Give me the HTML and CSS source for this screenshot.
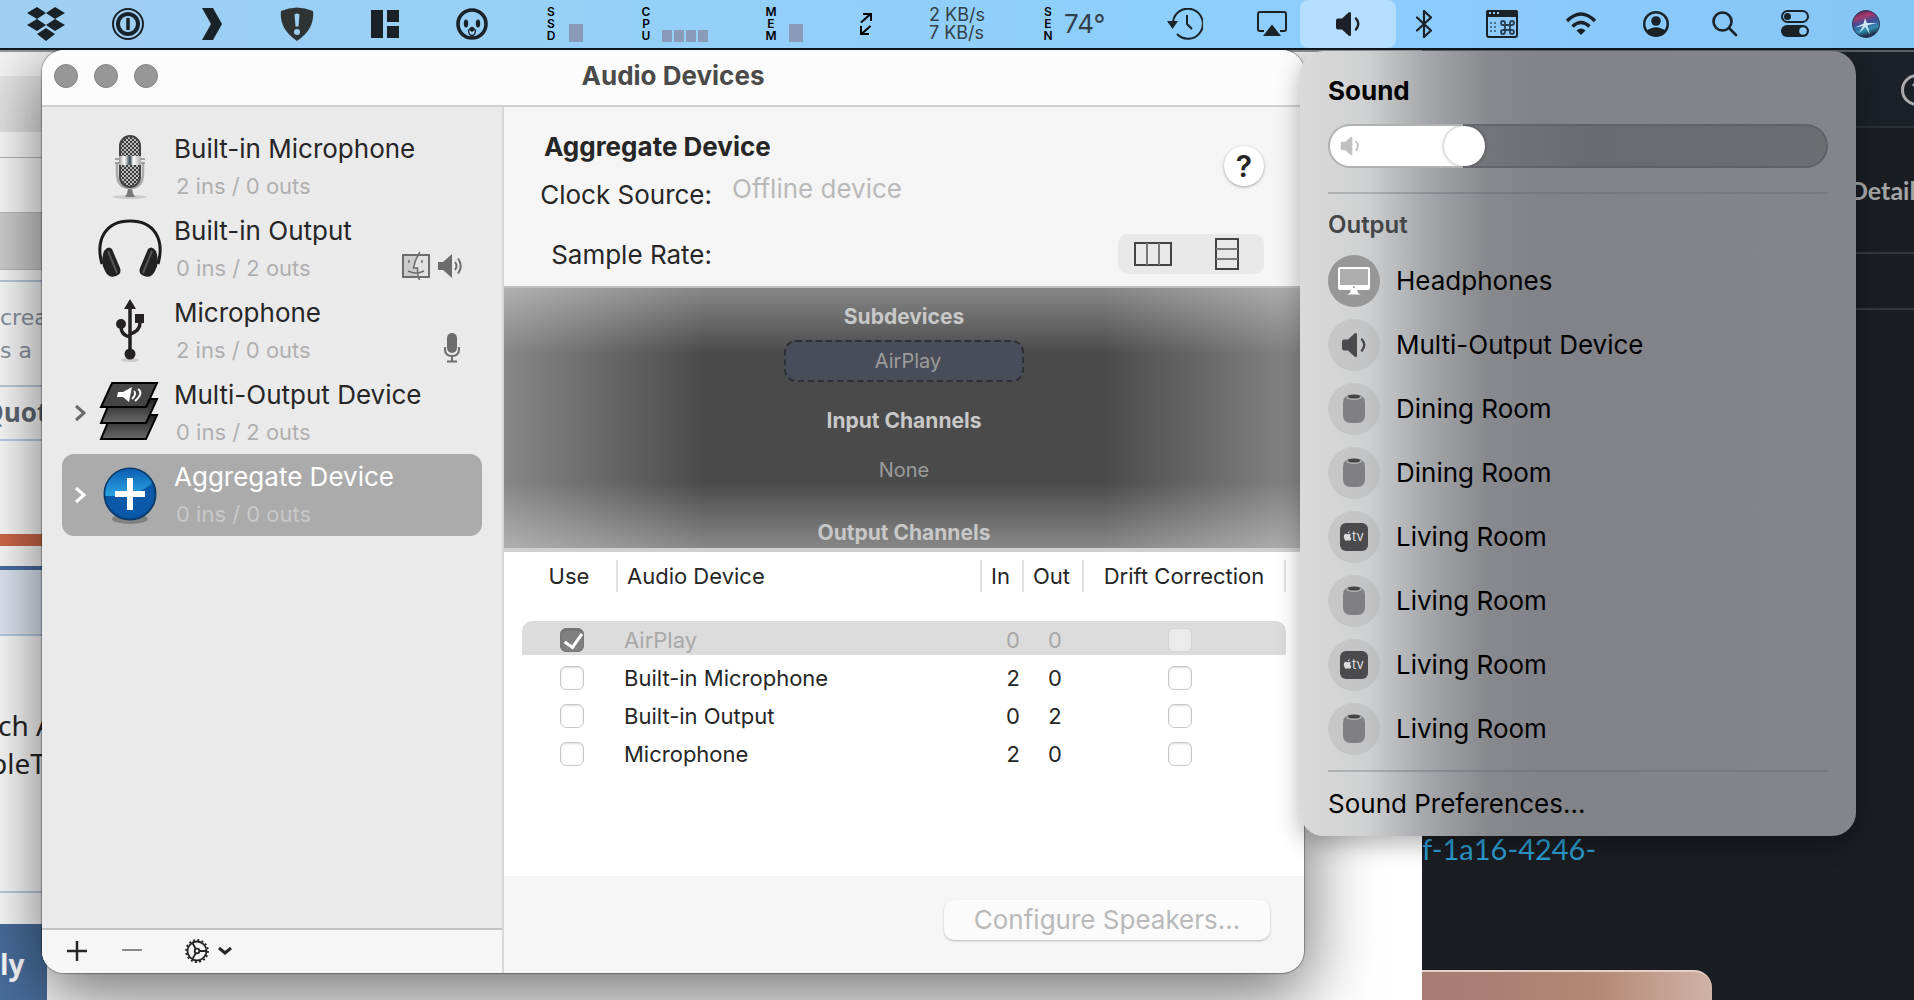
FILE: index.html
```html
<!DOCTYPE html>
<html lang="en">
<head>
    <meta charset="UTF-8">
    <meta name="viewport" content="width=device-width, initial-scale=1.0">
    <title>Audio Devices</title>
    <link rel="stylesheet" href="styles.css">
</head>
<body>

<!-- shared icons -->
<svg class="defs" aria-hidden="true">
    <symbol id="homepod" viewBox="0 0 22 30">
        <rect x="0" y="1" width="22" height="28" rx="7" fill="#808082"/>
        <ellipse cx="11" cy="3" rx="8" ry="3" fill="#b4b4b6"/>
        <ellipse cx="11" cy="2.500" rx="6.500" ry="2" fill="#48484a"/>
    </symbol>
    <symbol id="appletv" viewBox="0 0 28 28">
        <rect width="28" height="28" rx="6" fill="#4b4b4d"/>
        <path d="M7.800 11.300c1-.6 2.500-.5 3.200.5-1.300.9-1.200 2.900.4 3.600-.5 1.300-1.200 2.300-1.900 2.300-.6 0-.9-.4-1.600-.4s-1 .4-1.600.4c-1.200 0-2.500-2.300-2.500-4.300 0-2.100 1.500-3.100 2.800-2.500.5.3.8.5 1.200.4zM7.800 10.600c0-1.200.8-2.100 1.800-2.300.1 1.200-.8 2.200-1.800 2.300z" fill="#ddd"/>
        <text x="12" y="18" class="tv-text">tv</text>
    </symbol>
    <symbol id="speaker" viewBox="0 0 26 26">
        <path d="M1 9.500q0-2 2-2h4l6.500-6q2.500-1.500 2.500 1v21q0 2.500-2.500 1l-6.500-6H3q-2 0-2-2z" fill="currentColor"/>
        <path d="M21 7.500q4.500 5.500 0 11" fill="none" stroke="currentColor" stroke-width="2.400" stroke-linecap="round"/>
    </symbol>
</svg>

<header class="menubar">
    <div class="menu-left">
        <div class="menu-apps">
            <svg width="38" height="34" viewBox="0 0 38 34" fill="#1a2228"><path d="M10 0l9 6-9 6-10-6zM28 0l10 6-10 6-9-6zM10 12l9 6-9 6-10-6zM28 12l10 6-10 6-9-6zM19 21l9 6-9 7-9-7z"/></svg>
            <svg width="32" height="32" viewBox="0 0 32 32" fill="none" stroke="#1a2228"><circle cx="16" cy="16" r="15" stroke-width="2"/><circle cx="16" cy="16" r="10" stroke-width="4"/><path d="M16 10v12" stroke-width="3.500"/></svg>
        </div>
        <svg width="22" height="32" viewBox="1 0 22 32" fill="#1a2228"><path d="M2 0h11l9 16-9 16H2l9-16z"/></svg>
        <svg width="34" height="34" viewBox="0 0 34 34"><path d="M1 4Q17-3 33 4Q35 22 17 34Q-1 22 1 4z" fill="#303334"/><path d="M14.500 7.500q2.500-2 5 0l-1 12h-3z" fill="#9bcff2"/><circle cx="17" cy="25" r="3" fill="#9bcff2"/></svg>
        <svg width="28" height="28" viewBox="0 0 28 28" fill="#1a2228"><path d="M0 0h12v28H0zM16 0h12v12H16zM16 16h12v12H16z"/></svg>
        <svg width="32" height="32" viewBox="0 0 32 32"><circle cx="16" cy="16" r="14" fill="none" stroke="#1a2228" stroke-width="3.600"/><ellipse cx="10" cy="15.500" rx="2.200" ry="4" fill="#1a2228"/><ellipse cx="22" cy="15.500" rx="2.200" ry="4" fill="#1a2228"/><path d="M12.500 21.500q3.500-5.500 7 0l-3.500 2.500z" fill="#1a2228"/><path d="M12.500 21.500q0 6 3.500 6t3.500-6" fill="none" stroke="#1a2228" stroke-width="1.300"/></svg>
        <div class="stat">
            <span class="stat-label">S<br>S<br>D</span>
            <span class="bar bar-wide"></span>
        </div>
        <div class="stat stat-cpu">
            <span class="stat-label">C<br>P<br>U</span>
            <div class="cores"><span class="bar"></span><span class="bar"></span><span class="bar"></span><span class="bar"></span></div>
        </div>
        <div class="stat">
            <span class="stat-label">M<br>E<br>M</span>
            <span class="bar bar-wide"></span>
        </div>
        <svg width="12" height="22" viewBox="0 0 12 22" fill="none" stroke="#000" stroke-width="2"><path d="M1 9.500L10 1.500M3 1h8v7M10.500 13L2 20.500M1 13v8h8"/></svg>
        <div class="network">2 KB/s<br>7 KB/s</div>
        <div class="stat stat-temp">
            <span class="stat-label">S<br>E<br>N</span>
            <span class="temp">74°</span>
        </div>
        <svg width="36" height="32" viewBox="0 0 36 32" fill="none" stroke="#1a2228" stroke-width="2"><path d="M6 14a15 15 0 1 1 4 12"/><path d="M20 7v9l5 5"/><path d="M0 13h11l-5.500 8z" fill="#1a2228" stroke="none"/></svg>
    </div>
    <div class="menu-right">
        <svg width="30" height="26" viewBox="0 0 30 26" fill="none" stroke="#1a2228" stroke-width="2"><path d="M7 20H3q-2 0-2-2V3q0-2 2-2h24q2 0 2 2v15q0 2-2 2h-4"/><path d="M15 13.500L24 25H6z" fill="#1a2228" stroke="none"/></svg>
        <button class="volume" aria-label="Volume"><svg width="26" height="26"><use href="#speaker"/></svg></button>
        <svg width="30" height="28" viewBox="0 0 30 28" fill="none" stroke="#1a2228" stroke-width="2.200" stroke-linejoin="round" stroke-linecap="round"><path d="M8 7.500l14 13-7 6.500V1l7 6.500-14 13"/></svg>
        <svg width="34" height="30" viewBox="0 0 34 30"><rect x="2" y="2" width="30" height="26" rx="2" fill="none" stroke="#1a2228" stroke-width="2"/><path d="M1 3q0-2 2-2h28q2 0 2 2v5H1z" fill="#1a2228"/><path d="M4 4h2M8 4h2M12 4h2" stroke="#8ccbfc" stroke-width="2"/><path d="M5 14h2M9 14h2M5 18h2M9 18h2M5 22h2M9 22h2" stroke="#49708c" stroke-width="2"/><path d="M20 16h5v5h-5zM20 16h-2a2 2 0 1 1 2-2zM25 16v-2a2 2 0 1 1 2 2zM25 21h2a2 2 0 1 1-2 2zM20 21v2a2 2 0 1 1-2-2z" fill="none" stroke="#294052" stroke-width="1.800"/></svg>
        <svg width="32" height="24" viewBox="0 0 32 24" fill="none" stroke="#1a2228" stroke-width="3.400"><path d="M2 9q14-14 28 0M7.500 14.500q8.500-8 17 0"/><path d="M11.500 18.500q4.500-4 9 0L16 23z" fill="#1a2228" stroke="none"/></svg>
        <div class="menu-system">
            <svg width="26" height="26" viewBox="0 0 26 26"><circle cx="13" cy="13" r="11.800" fill="none" stroke="#1a2228" stroke-width="2.400"/><circle cx="13" cy="10" r="4.800" fill="#1a2228"/><path d="M3.500 20q9.500-7.500 19 0-9.500 10-19 0z" fill="#1a2228"/></svg>
            <svg width="26" height="26" viewBox="0 0 26 26" fill="none" stroke="#1a2228" stroke-width="2.600" stroke-linecap="round"><circle cx="10.500" cy="10.500" r="9"/><path d="M17.500 17.500l6.500 6.500"/></svg>
            <svg width="28" height="28" viewBox="0 0 28 28"><rect x="1" y="1" width="26" height="11" rx="5.500" fill="none" stroke="#1a2228" stroke-width="2"/><circle cx="6.500" cy="6.500" r="3.500" fill="#1a2228"/><rect x="0" y="15" width="28" height="12" rx="6" fill="#1a2228"/><circle cx="22" cy="21" r="3.800" fill="#8ccbfc"/></svg>
            <svg width="28" height="28" viewBox="0 0 28 28"><defs><linearGradient id="siri" x2=".3" y2="1"><stop offset="0" stop-color="#2a2440"/><stop offset=".3" stop-color="#a8376c"/><stop offset=".55" stop-color="#3c4f9c"/><stop offset=".8" stop-color="#2f8fb0"/><stop offset="1" stop-color="#20304e"/></linearGradient></defs><circle cx="14" cy="14" r="13.500" fill="url(#siri)" stroke="#2b3550"/><path d="M13 8l2 5L25 13l-9.500 2.200L18 25l-4.500-8L7 23l4-7-8 1.500 8.500-4z" fill="#e8fbff" opacity=".85"/></svg>
        </div>
    </div>
</header>

<main class="desktop">

    <!-- browser page behind everything -->
    <section class="back-page">
        <div class="page-tabs"></div>
        <div class="page-toolbar"></div>
        <div class="page-row"></div>
        <div class="page-row page-row-tall"></div>
        <div class="page-gray"></div>
        <div class="page-gap"></div>
        <div class="page-note">crea<br>s a</div>
        <div class="page-quote">Quot</div>
        <div class="page-orange"></div>
        <div class="page-blue"></div>
        <div class="page-text"><p>ch A</p><p class="page-clip">pleT</p></div>
        <div class="page-reply">ly</div>
    </section>

    <section class="dark-app">
        <div class="dark-top">
            <svg width="32" height="32" viewBox="0 0 32 32" fill="none" stroke="#a9abad" stroke-width="3"><circle cx="16" cy="16" r="14.500"/><path d="M12 12q4-5 7 0"/></svg>
        </div>
        <div class="dark-details">Detail</div>
        <div class="dark-row"></div>
        <div class="dark-body">
            <a href="#" class="dark-link">f-1a16-4246-</a>
            <div class="dark-card"></div>
        </div>
    </section>

    <section class="window">
        <div class="titlebar">
            <div class="lights"><span></span><span></span><span></span></div>
            <h1>Audio Devices</h1>
        </div>
        <div class="window-body">
            <aside class="sidebar">
                <ul class="devices">
                    <li class="device">
                        <span class="arrow"></span>
                        <svg class="device-icon" viewBox="0 0 64 64">
                            <defs>
                                <pattern id="mesh" width="4" height="4" patternUnits="userSpaceOnUse"><rect width="4" height="4" fill="#3c3c3c"/><circle cx="1" cy="1" r="1" fill="#e4e4e4"/><circle cx="3" cy="3" r="1" fill="#e4e4e4"/></pattern>
                                <linearGradient id="chrome"><stop offset="0" stop-color="#999"/><stop offset=".25" stop-color="#fff"/><stop offset=".5" stop-color="#34464e"/><stop offset=".65" stop-color="#fff"/><stop offset="1" stop-color="#aaa"/></linearGradient>
                            </defs>
                            <ellipse cx="32" cy="62" rx="17" ry="2" fill="#ccc"/>
                            <path d="M27 62q3-4 3-10h4q0 6 3 10z" fill="#777"/>
                            <path d="M19 28v10q0 15 13 15t13-15V28" fill="none" stroke="#aaa" stroke-width="2.500"/>
                            <path d="M17 24h6M17 28h6M41 24h6M41 28h6" stroke="#888" stroke-width="1.500"/>
                            <rect x="22" y="1" width="20" height="51" rx="10" fill="url(#mesh)" stroke="#444" stroke-width="2"/>
                            <rect x="21" y="21" width="22" height="9" fill="url(#chrome)"/>
                        </svg>
                        <div class="device-text"><h2>Built-in Microphone</h2><p>2 ins / 0 outs</p></div>
                    </li>
                    <li class="device">
                        <span class="arrow"></span>
                        <svg class="device-icon" viewBox="0 0 64 64">
                            <path d="M4 47C-3 22 8 4 32 4s35 18 28 43" fill="none" stroke="#1c1c1c" stroke-width="3"/>
                            <path d="M6 34q4-6 8-2l8 19q2 6-4 8-7 3-11-5Q2 46 6 34z" fill="#222"/>
                            <path d="M58 34q-4-6-8-2l-8 19q-2 6 4 8 7 3 11-5 5-8 1-20z" fill="#222"/>
                            <path d="M10 34l9 22M54 34l-9 22" stroke="#555" stroke-width="2"/>
                        </svg>
                        <div class="device-text"><h2>Built-in Output</h2><p>0 ins / 2 outs</p></div>
                        <div class="device-flags">
                            <svg width="28" height="30" viewBox="0 0 28 30" fill="none" stroke="#6c6c6c"><rect x="1" y="4" width="26" height="22" fill="#e2e2e3" stroke-width="2"/><path d="M2 5h13l-4 12h4v8H2z" fill="#ccc" stroke="none"/><path d="M18 1q-5 7-6.500 16h4q0 8 2 12M7 9v3M20 9v3M6 20q8 4 16 0" stroke-width="1.500"/></svg>
                            <svg width="28" height="24" viewBox="0 0 28 24" fill="none" stroke="#6c6c6c" stroke-width="2"><path d="M0 8h5l9-8v24l-9-8H0z" fill="#6c6c6c" stroke="none"/><path d="M17 8q3 4 0 8M20 4.500q5.500 7.500 0 15" /></svg>
                        </div>
                    </li>
                    <li class="device">
                        <span class="arrow"></span>
                        <svg class="device-icon" viewBox="0 0 64 64">
                            <ellipse cx="32" cy="61" rx="9" ry="2" fill="#ccc"/>
                            <path d="M32 8v46M23 26v2q0 8 9 10M42 20v4q0 8-10 11" fill="none" stroke="#242122" stroke-width="3.500"/>
                            <path d="M32 0l6 10H26z" fill="#242122"/><circle cx="23" cy="25" r="5" fill="#242122"/><path d="M37 15h9v9h-9z" fill="#242122"/><circle cx="32" cy="55" r="5.500" fill="#242122"/>
                        </svg>
                        <div class="device-text"><h2>Microphone</h2><p>2 ins / 0 outs</p></div>
                        <div class="device-flags">
                            <svg width="28" height="30" viewBox="0 0 28 30" fill="none" stroke="#6c6c6c" stroke-width="2"><rect x="9" y="0" width="10" height="20" rx="5" fill="#6c6c6c" stroke="none"/><path d="M7 14v2q0 7 7 7t7-7v-2M14 23v5M9 28.500h10"/></svg>
                        </div>
                    </li>
                    <li class="device">
                        <button class="arrow" aria-label="Expand"><svg width="12" height="20" viewBox="0 0 12 20" fill="none" stroke="#6a6a6a" stroke-width="3"><path d="M2 3l8 7-8 7"/></svg></button>
                        <svg class="device-icon" viewBox="0 0 64 64">
                            <defs><linearGradient id="sheet" x2="0" y2="1"><stop offset="0" stop-color="#222"/><stop offset="1" stop-color="#6a6a6a"/></linearGradient></defs>
                            <path d="M13 34h46L48 58H3z" fill="url(#sheet)" stroke="#000" stroke-width="2"/>
                            <path d="M13 18h46L48 42H3z" fill="url(#sheet)" stroke="#000" stroke-width="2"/>
                            <path d="M14 2h45L48 26H3z" fill="#454545" stroke="#000" stroke-width="2"/>
                            <path d="M20 11h5l9-5-3 15-6-5h-6z" fill="#fff"/><path d="M36 10q3 3-2 8M40 8q6 4-3 12" fill="none" stroke="#fff" stroke-width="2"/>
                        </svg>
                        <div class="device-text"><h2>Multi-Output Device</h2><p>0 ins / 2 outs</p></div>
                    </li>
                    <li class="device selected">
                        <button class="arrow" aria-label="Expand"><svg width="12" height="20" viewBox="0 0 12 20" fill="none" stroke="#fff" stroke-width="3"><path d="M2 3l8 7-8 7"/></svg></button>
                        <svg class="device-icon" viewBox="0 0 64 64">
                            <defs><linearGradient id="blue" x2="0" y2="1"><stop offset="0" stop-color="#0d5fb4"/><stop offset="1" stop-color="#2aa6e2"/></linearGradient></defs>
                            <ellipse cx="32" cy="56" rx="18" ry="5" fill="#808080"/>
                            <circle cx="32" cy="31" r="25.500" fill="#0a58a8" stroke="#0b3c6e" stroke-width="2"/>
                            <path d="M7.500 33A24.500 24.500 0 0 1 54 20Q40 34 7.500 33z" fill="url(#blue)"/>
                            <path d="M32 15v32M17 31h30" stroke="#fff" stroke-width="6"/>
                        </svg>
                        <div class="device-text"><h2>Aggregate Device</h2><p>0 ins / 0 outs</p></div>
                    </li>
                </ul>
                <div class="sidebar-tools">
                    <button aria-label="Add"><svg width="22" height="22" viewBox="0 0 22 22" stroke="#262626" stroke-width="2.500"><path d="M11 1v20M1 11h20"/></svg></button>
                    <button aria-label="Remove"><svg width="22" height="22" viewBox="0 0 22 22" stroke="#8a8a8a" stroke-width="2"><path d="M1 10h20"/></svg></button>
                    <button class="gear" aria-label="Actions">
                        <svg width="24" height="24" viewBox="0 0 24 24" fill="none" stroke="#262626" stroke-width="1.800"><circle cx="12" cy="12" r="9.500"/><circle cx="12" cy="12" r="11" stroke-dasharray="2 2.320"/><circle cx="12" cy="12" r="2.300"/><path d="M14.300 12H21M10.800 10L7.500 4M10.800 14l-3.300 6"/></svg>
                        <svg width="14" height="10" viewBox="0 0 14 10" fill="none" stroke="#262626" stroke-width="3"><path d="M1 2l6 5 6-5"/></svg>
                    </button>
                </div>
            </aside>

            <div class="detail">
                <div class="detail-head">
                    <div class="detail-form">
                        <h2>Aggregate Device</h2>
                        <span class="form-label">Clock Source:</span>
                        <span class="offline">Offline device</span>
                        <span class="form-label">Sample Rate:</span>
                    </div>
                    <div class="detail-buttons">
                        <button class="help">?</button>
                        <div class="segmented">
                            <button aria-label="Columns"><svg width="38" height="24" viewBox="0 0 38 24" fill="none" stroke="#444" stroke-width="2"><rect x="1" y="1" width="36" height="22"/><path d="M13 1v22M25 1v22" stroke="#777"/></svg></button>
                            <button aria-label="Rows"><svg width="24" height="32" viewBox="0 0 24 32" fill="none" stroke="#444" stroke-width="2"><rect x="1" y="1" width="22" height="30"/><path d="M1 11h22M1 21h22" stroke="#777"/></svg></button>
                        </div>
                    </div>
                </div>

                <div class="channels">
                    <h3>Subdevices</h3>
                    <div class="subdevice">AirPlay</div>
                    <h3>Input Channels</h3>
                    <p>None</p>
                    <h3>Output Channels</h3>
                </div>

                <div class="table-wrap">
                    <table>
                        <thead>
                            <tr>
                                <th class="col-use"><span>Use</span></th>
                                <th class="col-name"><span>Audio Device</span></th>
                                <th class="col-in"><span>In</span></th>
                                <th class="col-out"><span>Out</span></th>
                                <th class="col-drift"><span>Drift Correction</span></th>
                            </tr>
                        </thead>
                        <tbody>
                            <tr class="offline-row">
                                <td class="col-use"><input type="checkbox" aria-label="Use AirPlay" checked></td>
                                <td class="col-name">AirPlay</td>
                                <td class="col-in">0</td>
                                <td class="col-out">0</td>
                                <td class="col-drift"><input type="checkbox" aria-label="Drift correction for AirPlay" disabled></td>
                            </tr>
                            <tr>
                                <td class="col-use"><input type="checkbox" aria-label="Use Built-in Microphone"></td>
                                <td class="col-name">Built-in Microphone</td>
                                <td class="col-in">2</td>
                                <td class="col-out">0</td>
                                <td class="col-drift"><input type="checkbox" aria-label="Drift correction for Built-in Microphone"></td>
                            </tr>
                            <tr>
                                <td class="col-use"><input type="checkbox" aria-label="Use Built-in Output"></td>
                                <td class="col-name">Built-in Output</td>
                                <td class="col-in">0</td>
                                <td class="col-out">2</td>
                                <td class="col-drift"><input type="checkbox" aria-label="Drift correction for Built-in Output"></td>
                            </tr>
                            <tr>
                                <td class="col-use"><input type="checkbox" aria-label="Use Microphone"></td>
                                <td class="col-name">Microphone</td>
                                <td class="col-in">2</td>
                                <td class="col-out">0</td>
                                <td class="col-drift"><input type="checkbox" aria-label="Drift correction for Microphone"></td>
                            </tr>
                        </tbody>
                    </table>
                </div>

                <div class="detail-footer">
                    <button class="configure" disabled>Configure Speakers...</button>
                </div>
            </div>
        </div>
    </section>

    <section class="sound">
        <h2>Sound</h2>
        <div class="slider">
            <input type="range" min="0" max="100" value="25" aria-label="Volume">
            <svg width="22" height="20" viewBox="0 0 26 26"><use href="#speaker"/></svg>
        </div>
        <hr>
        <h3>Output</h3>
        <div class="outputs">
            <button class="output">
                <span class="circle active"><svg width="32" height="28" viewBox="0 0 32 28"><rect x="1" y="1" width="30" height="21" rx="1" fill="#adadad" stroke="#fff" stroke-width="2"/><path d="M1 18h30v4H1zM13 22h6l1 4 3 1.500H9l3-1.500z" fill="#fff"/><circle cx="16" cy="20" r="1" fill="#999"/></svg></span>
                Headphones
            </button>
            <button class="output"><span class="circle"><svg width="26" height="26"><use href="#speaker"/></svg></span>Multi-Output Device</button>
            <button class="output"><span class="circle"><svg width="22" height="30"><use href="#homepod"/></svg></span>Dining Room</button>
            <button class="output"><span class="circle"><svg width="22" height="30"><use href="#homepod"/></svg></span>Dining Room</button>
            <button class="output"><span class="circle"><svg width="28" height="28"><use href="#appletv"/></svg></span>Living Room</button>
            <button class="output"><span class="circle"><svg width="22" height="30"><use href="#homepod"/></svg></span>Living Room</button>
            <button class="output"><span class="circle"><svg width="28" height="28"><use href="#appletv"/></svg></span>Living Room</button>
            <button class="output"><span class="circle"><svg width="22" height="30"><use href="#homepod"/></svg></span>Living Room</button>
        </div>
        <hr>
        <a href="#" class="preferences">Sound Preferences...</a>
    </section>

</main>

</body>
</html>
```
FILE: styles.css
```css
* {
    margin: 0;
    padding: 0;
    box-sizing: border-box;
}
body {
    font-family: Inter, "Liberation Sans", sans-serif;
    font-size: 26px;
    line-height: 32px;
    color: #262626;
    height: 100vh;
    display: flex;
    flex-direction: column;
    overflow: hidden;
}
button {
    border: none;
    background: none;
    font: inherit;
    color: inherit;
}
svg {
    display: block;
    flex: none;
}
.defs {
    position: absolute;
    width: 0;
    height: 0;
}

/* menu bar */
.menubar {
    height: 50px;
    flex: none;
    display: flex;
    justify-content: space-between;
    align-items: center;
    padding: 0 34px 0 27px;
    background: linear-gradient(90deg, #9fd0f3, #8dcffb 60%, #8ccafe 80%, #84c6f4);
    border-bottom: 2px solid #10161c;
}
.menu-left {
    display: flex;
    align-items: center;
    gap: 57px;
}
.menu-apps {
    display: flex;
    align-items: center;
    gap: 47px;
}
.menu-right {
    display: flex;
    align-items: center;
    gap: 46px;
}
.menu-system {
    display: flex;
    align-items: center;
    gap: 43px;
}
.volume {
    height: 48px;
    padding: 0 35px;
    margin: 0 -33px;
    border-radius: 8px;
    background: rgba(255, 255, 255, 0.35);
    color: #1c2026;
}
.stat {
    width: 38px;
    height: 36px;
    display: flex;
    align-items: flex-end;
    justify-content: space-between;
}
.stat-cpu {
    width: 68px;
}
.stat-temp {
    width: 68px;
    align-items: center;
    justify-content: flex-start;
    gap: 10px;
}
.stat-label {
    width: 12px;
    font-size: 12px;
    font-weight: 600;
    line-height: 12px;
    color: #000;
    text-align: center;
}
.cores {
    display: flex;
    gap: 2px;
}
.bar {
    width: 10px;
    height: 12px;
    background: #8a9ab9;
}
.bar-wide {
    width: 14px;
    height: 18px;
}
.network {
    width: 56px;
    font-size: 18px;
    line-height: 18px;
    color: #33404a;
    white-space: nowrap;
}
.temp {
    color: #33404a;
}

/* desktop */
.desktop {
    flex: 1;
    position: relative;
    overflow: hidden;
    background: #1a1d21;
}
.back-page {
    position: absolute;
    top: 0;
    left: 0;
    bottom: 0;
    right: 492px;
    background: #fff;
    border-top: 2px solid #999;
}
.back-page > div {
    max-width: 600px;
}
.page-tabs {
    height: 24px;
    background: #f6f6f6;
}
.page-toolbar {
    height: 56px;
    background: #e6e6e6;
}
.page-row {
    height: 26px;
    border-bottom: 1px solid #bbb;
}
.page-row-tall {
    height: 55px;
}
.page-gray {
    height: 57px;
    background: #d2d2d2;
    border-bottom: 1px solid #bbb;
}
.page-gap {
    height: 12px;
    border-bottom: 2px solid #bdd0e6;
}
.page-note {
    height: 105px;
    padding-top: 19px;
    border-bottom: 2px solid #bdd0e6;
    font-family: "DejaVu Sans", sans-serif;
    font-size: 22px;
    line-height: 33px;
    color: #8b96a2;
}
.page-quote {
    height: 54px;
    margin-bottom: 93px;
    border-bottom: 2px solid #bdd0e6;
    font-family: "Open Sans", sans-serif;
    font-size: 26px;
    font-weight: bold;
    line-height: 50px;
    text-indent: -17px;
    color: #5f6873;
}
.page-orange {
    height: 12px;
    margin-bottom: 20px;
    background: #d0694a;
}
.page-blue {
    height: 70px;
    margin-bottom: 70px;
    background: #e4ecf8;
    border-top: 4px solid #4a6fa5;
    border-bottom: 2px solid #bdd0e6;
}
.page-text {
    height: 187px;
    border-bottom: 2px solid #bdd0e6;
    font-family: "Noto Sans", sans-serif;
    font-size: 28px;
    line-height: 38px;
    text-indent: -2px;
}
.page-text .page-clip {
    text-indent: -10px;
}
.page-reply {
    width: 47px;
    height: 76px;
    margin-top: 31px;
    background: #4a6f9f;
    font-family: "Open Sans", sans-serif;
    font-size: 28px;
    font-weight: bold;
    line-height: 80px;
    color: #fff;
}

.dark-app {
    position: absolute;
    top: 0;
    bottom: 0;
    right: 0;
    width: 492px;
    display: flex;
    flex-direction: column;
    background: #1a1d21;
    font-family: Lato, sans-serif;
    overflow: hidden;
}
.dark-top {
    height: 78px;
    padding-top: 22px;
    padding-left: 479px;
    background: #1b2128;
    border-top: 2px solid #5c6064;
    border-bottom: 2px solid #2c2f33;
}
.dark-details {
    height: 126px;
    padding-left: 427px;
    border-bottom: 2px solid #35373b;
    font-size: 25px;
    font-weight: bold;
    line-height: 124px;
    color: #a3a5a7;
}
.dark-row {
    height: 56px;
    border-bottom: 2px solid #35373b;
}
.dark-body {
    flex: 1;
    display: flex;
    flex-direction: column;
    justify-content: flex-end;
    align-items: flex-start;
}
.dark-link {
    margin-bottom: 105px;
    font-size: 29px;
    text-decoration: none;
    color: #2b9bcf;
}
.dark-card {
    width: 290px;
    height: 30px;
    border-top: 2px solid #e6d0c6;
    border-top-right-radius: 18px;
    background: linear-gradient(90deg, #a57b73, #b48875 60%, #cfb3a5);
}

/* audio devices window */
.window {
    position: absolute;
    top: 0;
    left: 42px;
    right: 610px;
    bottom: 27px;
    display: flex;
    flex-direction: column;
    border-radius: 22px;
    overflow: hidden;
    background: #f5f5f5;
    box-shadow: 0 0 1px 1px rgba(0, 0, 0, 0.3), 0 20px 70px 4px rgba(0, 0, 0, 0.55);
}
.titlebar {
    height: 57px;
    flex: none;
    padding: 0 12px 3px;
    display: grid;
    grid-template-columns: 1fr auto 1fr;
    align-items: center;
    background: #fcfcfc;
    border-bottom: 2px solid #cfcfcf;
}
.titlebar h1 {
    font-size: 26px;
    color: #4a4a4a;
}
.lights {
    display: flex;
    gap: 16px;
}
.lights span {
    width: 24px;
    height: 24px;
    border: 1px solid #848484;
    border-radius: 50%;
    background: #979797;
}
.window-body {
    flex: 1;
    display: flex;
    min-height: 0;
}
.sidebar {
    width: 462px;
    flex: none;
    display: flex;
    flex-direction: column;
    background: #ebeaeb;
    border-right: 2px solid #d8d8d8;
}
.devices {
    flex: 1;
    padding: 19px 20px;
    list-style: none;
}
.device {
    height: 82px;
    display: flex;
    align-items: center;
    border-radius: 12px;
}
.device.selected {
    background: #ababab;
    color: #fff;
}
.arrow {
    width: 36px;
    flex: none;
    padding-left: 12px;
}
.device-icon {
    width: 64px;
    height: 64px;
}
.device-text {
    flex: 1;
    padding-left: 12px;
}
.device-text h2 {
    margin-bottom: 5px;
    font-size: 26px;
    font-weight: 400;
    white-space: nowrap;
}
.device-text p {
    padding-left: 2px;
    font-size: 22px;
    color: #b0b0b0;
}
.device.selected p {
    color: #c8c8c8;
}
.device-flags {
    align-self: flex-end;
    display: flex;
    align-items: center;
    gap: 8px;
    height: 44px;
    padding-right: 16px;
    padding-bottom: 4px;
}
.sidebar-tools {
    height: 45px;
    display: flex;
    align-items: center;
    gap: 33px;
    padding-left: 24px;
    padding-bottom: 1px;
    background: #f6f6f6;
    border-top: 2px solid #c4c4c4;
}
.gear {
    display: flex;
    align-items: center;
    gap: 9px;
    margin-left: 9px;
}

.detail {
    flex: 1;
    min-width: 0;
    display: flex;
    flex-direction: column;
}
.detail-head {
    display: flex;
    justify-content: space-between;
    padding: 24px 40px 12px;
    border-bottom: 2px solid #bfbfbf;
}
.detail-form {
    display: grid;
    grid-template-columns: 168px auto;
    grid-template-rows: 42px 38px 60px;
    column-gap: 20px;
    font-size: 26px;
}
.detail-form h2 {
    grid-column: span 2;
    font-size: 26px;
}
.form-label {
    align-self: end;
    justify-self: end;
    white-space: nowrap;
}
.offline {
    color: #b9b9b9;
}
.detail-buttons {
    display: flex;
    flex-direction: column;
    align-items: flex-end;
    gap: 48px;
    padding-top: 15px;
}
.help {
    width: 40px;
    height: 40px;
    border-radius: 50%;
    background: #fff;
    box-shadow: 0 1px 3px rgba(0, 0, 0, 0.35);
    font-size: 30px;
    font-weight: 600;
}
.segmented {
    width: 146px;
    height: 40px;
    display: flex;
    align-items: center;
    justify-content: space-between;
    padding: 0 25px 0 16px;
    border-radius: 10px;
    background: #e8e8e8;
}

.channels {
    height: 260px;
    overflow: hidden;
    padding-top: 17px;
    text-align: center;
    font-size: 20px;
    line-height: 24px;
    color: #9c9c9c;
    background:
        linear-gradient(90deg, rgba(255, 255, 255, 0.34), transparent 200px, transparent calc(100% - 200px), rgba(255, 255, 255, 0.34)),
        linear-gradient(rgba(255, 255, 255, 0.34), transparent 66px, transparent calc(100% - 66px), rgba(255, 255, 255, 0.34)),
        #4a4a4a;
}
.channels h3 {
    font-size: 21px;
    color: #c8c8c8;
}
.channels p {
    margin: 25px 0 39px;
}
.subdevice {
    width: 240px;
    height: 42px;
    margin: 11px auto 27px;
    padding-left: 8px;
    border: 2px dashed #2e2f32;
    border-radius: 12px;
    line-height: 38px;
    background: #494d59;
}

.table-wrap {
    flex: 1;
    padding: 8px 18px 0;
    background: #fff;
    border-top: 4px solid #d0d0d0;
}
table {
    width: 100%;
    table-layout: fixed;
    border-collapse: collapse;
    font-size: 22px;
}
th {
    height: 61px;
    vertical-align: top;
    text-align: left;
    font-weight: 400;
    white-space: nowrap;
}
th span {
    display: block;
    border-right: 2px solid #e0e0e0;
}
td {
    height: 38px;
}
th.col-use {
    width: 96px;
}
th.col-in {
    width: 42px;
}
th.col-out {
    width: 60px;
}
th.col-drift {
    width: 202px;
}
.col-use,
.col-drift {
    text-align: center;
}
td.col-name {
    padding-left: 6px;
}
th.col-name span,
th.col-in span,
th.col-out span {
    padding-left: 9px;
}
td.col-in {
    text-align: right;
    padding-right: 4px;
}
td.col-out {
    text-align: center;
    padding-left: 2px;
}
td.col-drift {
    padding-right: 10px;
}
.offline-row {
    color: #a8a8a8;
}
.offline-row td {
    background: linear-gradient(#dcdcdc, #dcdcdc) no-repeat 0 0 / 100% 34px;
}
.offline-row td:first-child {
    border-radius: 10px 0 0 0;
}
.offline-row td:last-child {
    border-radius: 0 10px 0 0;
}
input[type="checkbox"] {
    appearance: none;
    display: block;
    width: 24px;
    height: 24px;
    margin: 0 auto;
    border: 1px solid #c9c9c9;
    border-radius: 6px;
    background: #fff;
    box-shadow: inset 0 1px 2px rgba(0, 0, 0, 0.15);
}
td.col-use input {
    margin-left: 38px;
}
input[type="checkbox"]:checked {
    position: relative;
    border-color: #777;
    background: #808080;
}
input[type="checkbox"]:checked::after {
    content: "";
    position: absolute;
    left: 7px;
    top: 1px;
    width: 8px;
    height: 15px;
    border: solid #fff;
    border-width: 0 3px 3px 0;
    transform: rotate(35deg);
}
input[type="checkbox"]:disabled {
    border-color: #d4d4d4;
    background: #ebebeb;
    box-shadow: none;
}

.detail-footer {
    height: 97px;
    display: flex;
    justify-content: flex-end;
    padding: 24px 34px 0;
}
.configure {
    width: 326px;
    height: 40px;
    border-radius: 10px;
    background: #fbfbfb;
    box-shadow: 0 1px 2px rgba(0, 0, 0, 0.25);
    color: #b9b9b9;
    font-size: 26px;
}

/* sound menu */
.sound {
    position: absolute;
    top: 1px;
    right: 58px;
    width: 556px;
    padding: 24px 28px 16px;
    border-radius: 24px;
    background: linear-gradient(90deg, #dadada, #d0d1d2 65px, #a6a8ab 125px, #888a8e 185px, #828389 240px, #84858a);
    box-shadow: 0 8px 24px rgba(0, 0, 0, 0.3);
    color: #000;
    font-size: 26px;
}
.sound h2 {
    font-size: 26px;
}
.slider {
    position: relative;
    height: 44px;
    margin: 17px 0 24px;
}
.slider svg {
    position: absolute;
    left: 11px;
    top: 12px;
    color: #c0c0c0;
}
.slider input {
    appearance: none;
    display: block;
    width: 100%;
    height: 44px;
    border: 2px solid rgba(80, 82, 86, 0.45);
    border-radius: 22px;
    overflow: hidden;
    background: linear-gradient(90deg, #fff 135px, #75777b 135px, #6a6b70 260px, #6d6e72) border-box;
}
.slider input::-webkit-slider-thumb {
    appearance: none;
    width: 41px;
    height: 40px;
    border-radius: 50%;
    background: #fff;
    box-shadow: 0 0 3px 1px rgba(0, 0, 0, 0.25);
}
.sound hr {
    border: none;
    border-top: 2px solid rgba(90, 92, 98, 0.3);
}
.sound h3 {
    margin: 15px 0 14px;
    font-size: 24px;
    font-weight: 600;
    color: #444547;
}
.outputs {
    display: flex;
    flex-direction: column;
    gap: 12px;
    margin-bottom: 15px;
}
.output {
    display: flex;
    align-items: center;
    gap: 16px;
    text-align: left;
}
.circle {
    width: 52px;
    height: 52px;
    display: flex;
    align-items: center;
    justify-content: center;
    border-radius: 50%;
    background: rgba(150, 150, 152, 0.22);
    color: #4a4a4c;
}
.circle.active {
    background: #979797;
}
.tv-text {
    font-size: 13px;
    fill: #ddd;
}
.preferences {
    display: block;
    margin-top: 16px;
    color: #000;
    text-decoration: none;
}
```
